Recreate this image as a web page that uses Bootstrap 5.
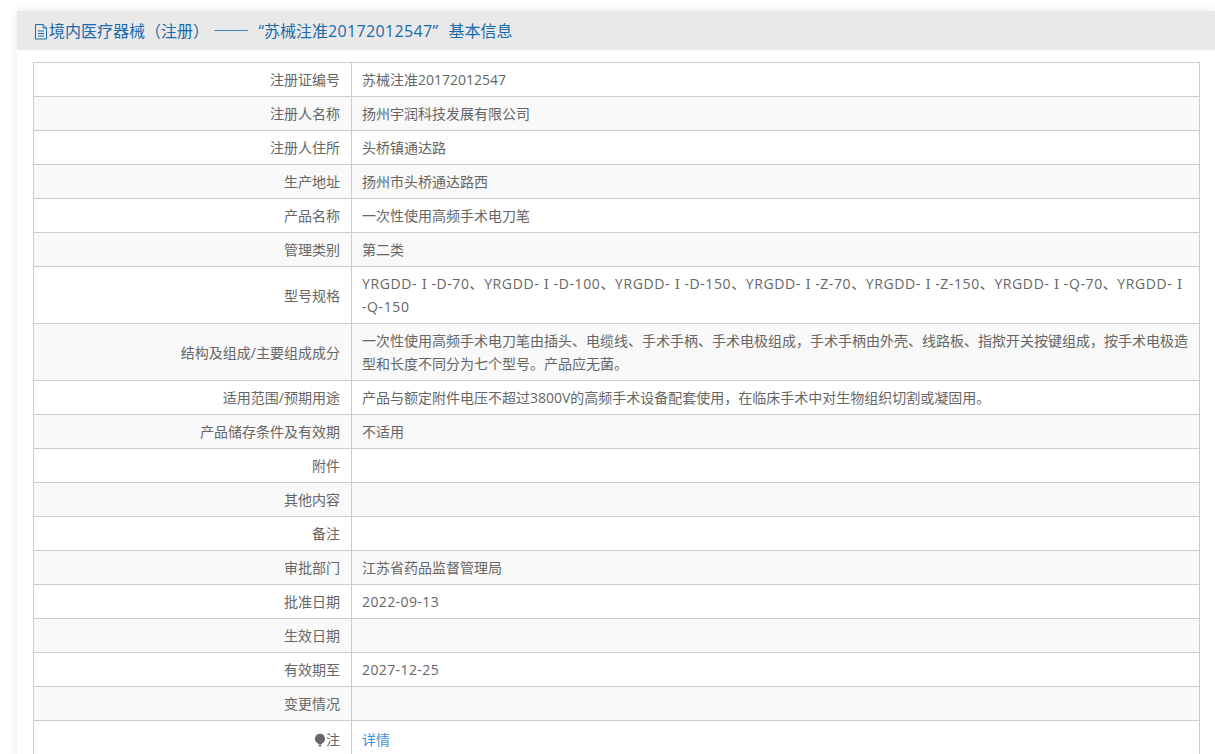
<!DOCTYPE html>
<html lang="zh-CN">
<head>
<meta charset="utf-8">
<title>基本信息</title>
<link rel="stylesheet" href="https://cdn.jsdelivr.net/npm/bootstrap@5.3.0/dist/css/bootstrap.min.css">
<style>
html,body{background:#fff;height:754px;overflow:hidden}
body{font-family:"Open Sans","Noto Sans CJK SC",sans-serif;font-size:14px;color:#666;padding:11px 0 0 17px}
.sheet{background:#fff;box-shadow:0 0 10px rgba(0,0,0,.09)}
.sheet-head{height:39px;background:#e9e9e9;color:#1a6aac;font-size:16px;line-height:38px;padding-left:17px;white-space:nowrap}
.sheet-head svg{vertical-align:-3px}
.paren{font-family:"Noto Sans CJK TC",sans-serif}
.dash{font-family:"Noto Sans CJK SC",sans-serif;font-size:18px;line-height:1;margin:0 -1px 0 4px}
.quote-l,.quote-r{display:inline-block;width:16px}
.quote-l{text-align:right}
.quote-r{text-align:left}
.code-no{letter-spacing:.35px}
.sheet-body{padding:12px 15px 0 16px}
.info-table{width:1167px;table-layout:fixed;margin:0;border-color:#ccc;font-size:14px;line-height:23px}
.info-table>tbody>tr>*{padding:5px 10px;border-color:#ccc;color:#666;background:transparent;box-shadow:none;font-weight:400;vertical-align:middle}
.info-table>tbody>tr>th{width:318px;text-align:right;padding-right:11px}
.info-table>tbody>tr:nth-child(even)>*{background:#f9f9f9}
.info-table>tbody>tr.note-row{height:38px}
.info-table a{color:#3d8fd6;text-decoration:none}
.roman{font-family:"DejaVu Serif",serif;font-size:13px;line-height:1;padding:0 4.6px;letter-spacing:0}
.info-table>tbody>tr>td.model-val{letter-spacing:.6px}
.keep-line{white-space:nowrap}
.date-val{letter-spacing:.4px}
.bulb{vertical-align:-2px}
</style>
</head>
<body>
<div class="sheet">
  <div class="sheet-head"><svg width="15" height="16" viewBox="0 0 15 16" fill="none" stroke="#1a6aac" stroke-width="1"><path d="M1.5 .5h7.5l3.5 3.5v11h-11z"/><path d="M9 .5v3.5h3.5M4 7h6M4 9.5h6M4 12h6"/></svg>境内医疗器械<span class="paren">（</span>注册<span class="paren">）</span><span class="dash">——</span><span class="quote-l">“</span>苏械注准<span class="code-no">20172012547</span><span class="quote-r">”</span>基本信息</div>
  <div class="sheet-body">
    <table class="table table-bordered info-table">
      <tbody>
        <tr><th>注册证编号</th><td>苏械注准20172012547</td></tr>
        <tr><th>注册人名称</th><td>扬州宇润科技发展有限公司</td></tr>
        <tr><th>注册人住所</th><td>头桥镇通达路</td></tr>
        <tr><th>生产地址</th><td>扬州市头桥通达路西</td></tr>
        <tr><th>产品名称</th><td>一次性使用高频手术电刀笔</td></tr>
        <tr><th>管理类别</th><td>第二类</td></tr>
        <tr><th>型号规格</th><td class="model-val">YRGDD-<span class="roman">Ⅰ</span>-D-70、YRGDD-<span class="roman">Ⅰ</span>-D-100、YRGDD-<span class="roman">Ⅰ</span>-D-150、YRGDD-<span class="roman">Ⅰ</span>-Z-70、YRGDD-<span class="roman">Ⅰ</span>-Z-150、YRGDD-<span class="roman">Ⅰ</span>-Q-70、YRGDD-<span class="roman">Ⅰ</span><wbr><span class="keep-line">-Q-150</span></td></tr>
        <tr><th>结构及组成/主要组成成分</th><td>一次性使用高频手术电刀笔由插头、电缆线、手术手柄、手术电极组成，手术手柄由外壳、线路板、指揿开关按键组成，按手术电极造型和长度不同分为七个型号。产品应无菌。</td></tr>
        <tr><th>适用范围/预期用途</th><td>产品与额定附件电压不超过3800V的高频手术设备配套使用，在临床手术中对生物组织切割或凝固用。</td></tr>
        <tr><th>产品储存条件及有效期</th><td>不适用</td></tr>
        <tr><th>附件</th><td></td></tr>
        <tr><th>其他内容</th><td></td></tr>
        <tr><th>备注</th><td></td></tr>
        <tr><th>审批部门</th><td>江苏省药品监督管理局</td></tr>
        <tr><th>批准日期</th><td class="date-val">2022-09-13</td></tr>
        <tr><th>生效日期</th><td></td></tr>
        <tr><th>有效期至</th><td class="date-val">2027-12-25</td></tr>
        <tr><th>变更情况</th><td></td></tr>
        <tr class="note-row"><th><svg class="bulb" width="12" height="14" viewBox="0 0 12 14"><path fill="#666" d="M6 .8a5 5 0 0 0-3 9c.7.5 1.4 1 1.7 1.7h2.6c.3-.7 1-1.200 1.700-1.700a5 5 0 0 0-3-9z"/><path fill="#666" d="M4.800 12h2.400v1l-.7.8h-1l-.7-.8z"/></svg>注</th><td><a href="#">详情</a></td></tr>
      </tbody>
    </table>
  </div>
</div>
</body>
</html>
